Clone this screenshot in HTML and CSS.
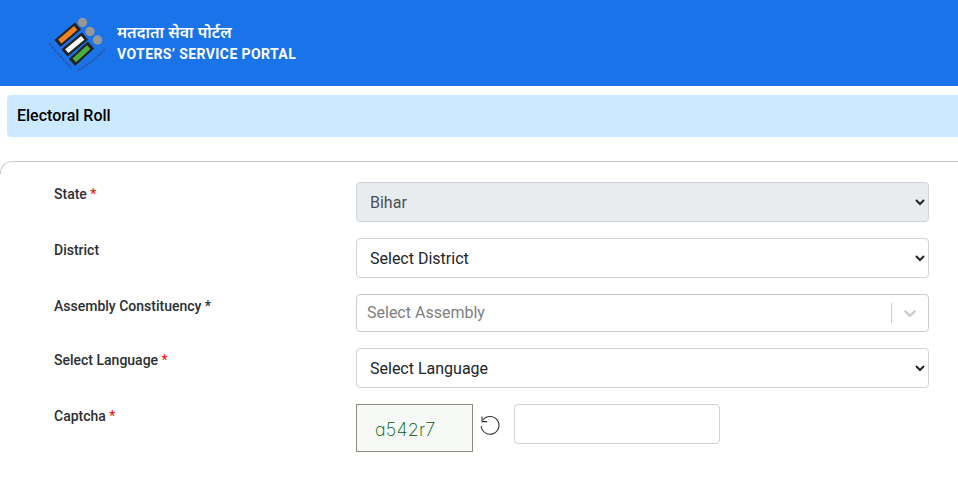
FILE: index.html
```html
<!DOCTYPE html>
<html lang="en">
<head>
<meta charset="utf-8">
<title>Electoral Roll</title>
<link rel="stylesheet" href="styles.css">
</head>
<body>
<header class="topbar">
  <svg class="logo" width="60" height="60" viewBox="48 14 60 60" aria-hidden="true">
    <g fill="none" stroke-linecap="butt">
      <path d="M49.500 43C57 53 64 61 72 68" stroke="#2456ad" stroke-width="2" stroke-dasharray="3 1" opacity=".8"/>
      <path d="M78 70C88 65 98 57 106 48" stroke="#2456ad" stroke-width="2" stroke-dasharray="3 1" opacity=".8"/>
      <path d="M57.500 43.500L78 26" stroke="#232323" stroke-width="9.500"/>
      <path d="M59.800 41.500L75.700 28" stroke="#f58220" stroke-width="5"/>
      <path d="M64.500 53L85 36" stroke="#232323" stroke-width="9.500"/>
      <path d="M66.800 51.100L82.700 37.900" stroke="#fff" stroke-width="5"/>
      <path d="M72 62.500L91 45" stroke="#232323" stroke-width="9.500"/>
      <path d="M74.300 60.400L88.700 47.100" stroke="#4caf3c" stroke-width="5"/>
    </g>
    <circle cx="82.500" cy="22.500" r="4.700" fill="#979797"/>
    <circle cx="90" cy="31.500" r="4.700" fill="#979797"/>
    <circle cx="97.500" cy="40" r="4.700" fill="#979797"/>
  </svg>
  <div class="brand">
    <div class="brand-hi">मतदाता सेवा पोर्टल</div>
    <div class="brand-en">VOTERS’ SERVICE PORTAL</div>
  </div>
</header>
<div class="banner">Electoral Roll</div>
<main class="card">
  <div class="row">
    <label class="label">State <span class="req">*</span></label>
    <select class="select select-disabled" disabled><option>Bihar</option></select>
  </div>
  <div class="row">
    <label class="label">District</label>
    <select class="select"><option>Select District</option></select>
  </div>
  <div class="row">
    <label class="label">Assembly Constituency *</label>
    <div class="combo">
      <span class="combo-text">Select Assembly</span>
      <span class="combo-sep"></span>
      <svg class="combo-arrow" width="20" height="20" viewBox="0 0 20 20" aria-hidden="true"><path d="M4.516 7.548c.436-.446 1.043-.481 1.576 0L10 11.295l3.908-3.747c.533-.481 1.141-.446 1.574 0 .436.445.408 1.197 0 1.615-.406.418-4.695 4.502-4.695 4.502a1.095 1.095 0 0 1-1.576 0S4.924 9.581 4.516 9.163c-.409-.418-.436-1.170 0-1.615z" fill="#ccc"/></svg>
    </div>
  </div>
  <div class="row">
    <label class="label">Select Language <span class="req">*</span></label>
    <select class="select"><option>Select Language</option></select>
  </div>
  <div class="row">
    <label class="label">Captcha <span class="req">*</span></label>
    <div class="captcha">
      <div class="captcha-img">a542r7</div>
      <svg class="refresh" width="22" height="22" viewBox="0 0 22 22" aria-hidden="true">
        <path d="M3.800 6.200A8.900 8.900 0 1 1 2.200 12" fill="none" stroke="#333" stroke-width="1.100"/>
        <path d="M3 2.600V7.600H8.200" fill="none" stroke="#333" stroke-width="1.100"/>
      </svg>
      <input class="captcha-input" type="text" aria-label="Captcha">
    </div>
  </div>
</main>
</body>
</html>
```
FILE: styles.css
```css
* { box-sizing: border-box; }
html, body { margin: 0; padding: 0; background: #fff; overflow: hidden; }
body { font-family: Roboto, "Noto Sans", sans-serif; color: #212529; }
.topbar {
  height: 86px;
  background: #1a73e8;
  display: flex;
  align-items: center;
  padding-left: 48px;
}
.logo { flex: none; margin-top: 2px; }
.brand { margin-left: 9px; color: #fff; margin-top: -2px; }
.brand-hi { font: 600 16px/22px "Noto Sans", "Noto Sans Devanagari", "Lohit Devanagari", sans-serif; }
.brand-en { font: 700 14px/20px Roboto, sans-serif; letter-spacing: .4px; margin-top: 1px; }
.banner {
  margin: 9px 0 0 7px;
  height: 42px;
  background: #cceaff;
  border-radius: 4px 0 0 4px;
  padding-left: 10px;
  font: 500 16px/42px Roboto, sans-serif;
  color: #000;
}
.card {
  margin-top: 24px;
  padding: 0 29px 0 54px;
  height: 320px;
}
.card::before {
  content: "";
  display: block;
  height: 12px;
  margin: 0 -29px 8px -54px;
  border-style: solid;
  border-color: #ccc;
  border-width: 1px 0 0 1px;
  border-top-left-radius: 12px;
}
.row { display: flex; align-items: flex-start; margin-bottom: 16px; }
.label {
  flex: none;
  width: 302px;
  font-size: 14px;
  font-weight: 500;
  line-height: 24px;
  color: #2b2f33;
}
.req { color: #f00; font-weight: 400; }
.select {
  flex: 1;
  height: 40px;
  min-width: 0;
  padding: 0 8px 0 9px;
  font: 400 16px Roboto, sans-serif;
  color: #212529;
  background-color: #fff;
  border: 1px solid #ced4da;
  border-radius: 4px;
}
.select-disabled { background-color: #e9ecef; opacity: 1; color: #212529; -webkit-text-fill-color: #495057; }
.combo {
  flex: 1;
  height: 38px;
  display: flex;
  align-items: center;
  border: 1px solid #ccc;
  border-radius: 4px;
  padding-left: 10px;
}
.combo-text { flex: 1; font-size: 16px; line-height: 34px; margin-top: -1px; color: #808080; }
.combo-sep { width: 1px; height: 20px; background: #ccc; }
.combo-arrow { margin: 0 8px; }
.captcha { display: flex; align-items: flex-start; }
.captcha-img {
  width: 117px;
  height: 48px;
  background: #f6f9f6;
  border: 1px solid #8a8a7e;
  padding: 14px 0 0 18px;
  font: 200 18px/22px Inter, Roboto, sans-serif;
  font-feature-settings: "cv11" 1;
  letter-spacing: .2px;
  color: #005c00;
}
.refresh { margin: 10px 0 0 6px; flex: none; }
.captcha-input {
  width: 206px;
  height: 40px;
  margin-left: 13px;
  border: 1px solid #ced4da;
  border-radius: 4px;
  background: #fff;
}
```
